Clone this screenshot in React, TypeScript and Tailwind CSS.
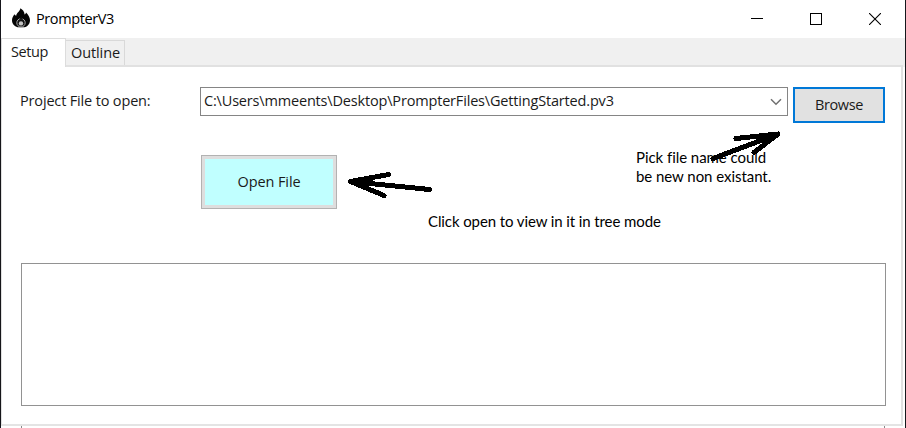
import React from "react";

function FlameIcon() {
  return (
    <svg width="18" height="20" viewBox="0 0 18 20" className="mb-[2px] shrink-0">
      <path
        d="M8.4 0.3C10.8 1.6 12.4 3.8 12.6 6.6C13.4 6.2 13.8 5.4 14 4.5C16.4 6.8 18 9.4 18 12.2C18 15.8 15.6 18.6 12.4 19.2L5.6 19.2C2.4 18.4 0 15.8 0 12.3C0 9.6 1.2 7.8 2.6 6.2C2.9 7.1 3.4 7.6 4.2 7.8C4.4 5.2 7.8 3.6 8.4 0.3Z"
        fill="#050505"
      />
      <circle cx="9" cy="14.8" r="4.2" fill="#111" stroke="#a8a8a8" strokeWidth="1" />
      <path d="M9.2 8.6L11.2 11.6H7.2Z" fill="#111" />
      <circle cx="9" cy="15.4" r="2.2" fill="#c4c4c4" />
    </svg>
  );
}

function TitleBar() {
  return (
    <header className="flex h-[38px] shrink-0 items-center bg-white pl-[11px] pr-[24px]">
      <FlameIcon />
      <span className="ml-[6px] text-[14.5px] tracking-[-0.4px] text-black">PrompterV3</span>
      <div className="ml-auto flex items-center gap-[47px]">
        <svg width="12" height="12" viewBox="0 0 12 12" shapeRendering="crispEdges">
          <path d="M0 5.5H12" stroke="#000" />
        </svg>
        <svg width="12" height="12" viewBox="0 0 12 12" shapeRendering="crispEdges">
          <rect x=".5" y=".5" width="11" height="11" fill="none" stroke="#000" />
        </svg>
        <svg width="12" height="12" viewBox="0 0 12 12">
          <path d="M0 0L12 12M12 0L0 12" stroke="#000" strokeWidth="1.1" />
        </svg>
      </div>
    </header>
  );
}

function Tabs() {
  return (
    <nav className="flex h-[29px] shrink-0 bg-[#f0f0f0]">
      <button className="h-[29px] w-[65px] border border-b-0 border-[#dcdcdc] bg-white pb-[3px] pr-[8px] text-[14.5px] tracking-[-0.4px]">Setup</button>
      <div className="flex flex-1 items-end border-b-2 border-[#e1e1e1]">
        <button className="h-[25px] w-[59px] border border-b-0 border-l-0 border-[#d9d9d9] pl-px text-[14.5px] leading-[24px] tracking-[-0.1px]">Outline</button>
      </div>
      <div className="w-[2px]" />
    </nav>
  );
}

export default function App() {
  return (
    <div className="relative flex h-[428px] w-[906px] flex-col overflow-hidden border-x border-l-[#15151a] border-r-[#15181c] bg-white font-['Open_Sans','Noto_Sans',sans-serif] text-[#1a1a1a]">
      <TitleBar />
      <Tabs />
      <main className="mr-[2px] flex h-[359px] shrink-0 flex-col border-b-2 border-l border-r-2 border-b-[#e4e4e4] border-l-[#e0e0e0] border-r-[#e1e1e1] pl-[18px] pt-[20px]">
        <div className="flex items-start">
          <label className="w-[180px] whitespace-nowrap text-[14.5px] leading-[27px] tracking-[-0.16px]">Project File to open:</label>
          <div className="flex h-[29px] w-[588px] justify-between border border-[#858585] pl-[3px] pr-[5px] leading-[25px]">
            <span className="whitespace-nowrap text-[14.5px] tracking-[-0.175px]">C:\Users\mmeents\Desktop\PrompterFiles\GettingStarted.pv3</span>
            <svg width="12" height="8" viewBox="0 0 12 8" className="mt-[10px]">
              <path d="M1 1.3L6 6.2L11 1.3" fill="none" stroke="#707070" strokeWidth="1.5" />
            </svg>
          </div>
          <button className="ml-[5px] h-[36px] w-[92px] border-2 border-[#0078d7] bg-[#e1e1e1] text-[14.5px] tracking-[-0.35px]">Browse</button>
        </div>
        <button className="ml-[181px] mt-[32px] h-[54px] w-[136px] border border-[#b2b2b2] bg-[#dedede] p-[3px]">
          <span className="flex h-full items-center justify-center bg-[#c0ffff] text-[14.5px] tracking-[-0.1px]">Open File</span>
        </button>
        <div className="ml-px mt-[54px] h-[143px] w-[865px] border border-[#929292]" />
      </main>
      <footer className="mx-[20px] flex justify-between">
        <i className="h-[2px] w-px bg-[#888]" />
        <i className="h-[2px] w-px bg-[#888]" />
      </footer>
      <p className="absolute left-[635px] top-[148px] whitespace-nowrap font-['Lato',sans-serif] text-[15px] leading-[19px] tracking-[-0.05px] text-black">
        Pick file name could
        <br />
        be new non existant.
      </p>
      <p className="absolute left-[427px] top-[212px] whitespace-nowrap font-['Lato',sans-serif] text-[15px] leading-[19px] tracking-[-0.1px] text-black">
        Click open to view in it in tree mode
      </p>
      <svg className="pointer-events-none absolute -left-px top-0" width="906" height="428" viewBox="0 0 906 428" shapeRendering="crispEdges">
        <g fill="none" stroke="#000" strokeWidth="5" strokeLinecap="round" strokeLinejoin="round">
          <path d="M713 158.5L778 134M736 138.5L778 134L754 152.5" />
          <path d="M429.5 189.5L350.5 181.5M388.5 174.5L350.5 181.5L384 195.5" />
          <path d="M356 182L370 181L366 184M773 135.5L762 138L764 140" strokeWidth="6" />
        </g>
      </svg>
    </div>
  );
}
